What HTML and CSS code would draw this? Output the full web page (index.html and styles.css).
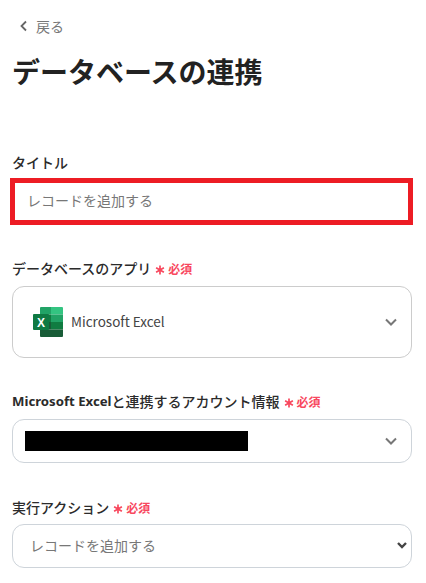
FILE: index.html
```html
<!DOCTYPE html>
<html lang="ja">
<head>
  <meta charset="UTF-8" />
  <meta name="viewport" content="width=device-width, initial-scale=1.0"/>
  <title>データベースの連携</title>
  <link rel="stylesheet" href="styles.css">
</head>
<body>
  <a class="back" href="#">
    <svg class="back-icon" width="10" height="12" viewBox="0 0 10 12"><path d="M7 1.500 2.500 6 7 10.500" fill="none" stroke="#666" stroke-width="1.800"/></svg>
    戻る
  </a>
  <h1>データベースの連携</h1>

  <form class="form">
    <div class="field field-title">
      <label>タイトル</label>
      <input class="title-input" type="text" placeholder="レコードを追加する" />
    </div>

    <div class="field field-app">
      <label>データベースのアプリ<span class="req"><svg class="star" width="10" height="10" viewBox="0 0 10 10"><path d="M5 .5v9M1.100 2.750l7.800 4.500M8.900 2.750l-7.800 4.500" stroke="#f8485e" stroke-width="1.700"/></svg>必須</span></label>
      <div class="picker picker-app">
        <svg class="excel" width="30" height="30" viewBox="0 0 30 30">
          <path d="M18 0H8a1 1 0 0 0-1 1v6.500h11z" fill="#21a366"/>
          <path d="M18 0h11a1 1 0 0 1 1 1v6.500H18z" fill="#33c481"/>
          <rect x="7" y="7.500" width="11" height="7.500" fill="#107c41"/>
          <rect x="18" y="7.500" width="12" height="7.500" fill="#21a366"/>
          <rect x="7" y="15" width="11" height="7.500" fill="#185c37"/>
          <rect x="18" y="15" width="12" height="7.500" fill="#107c41"/>
          <path d="M7 22.500h23V29a1 1 0 0 1-1 1H8a1 1 0 0 1-1-1z" fill="#185c37"/>
          <rect x="0" y="7" width="16" height="16" rx="1" fill="#0f7a43"/>
          <text class="excel-x" x="8" y="19.500" text-anchor="middle">X</text>
        </svg>
        <span class="picker-text">Microsoft Excel</span>
        <svg class="chevron" width="12" height="8" viewBox="0 0 12 8"><path d="M1 1.500 6 6.500 11 1.500" fill="none" stroke="#777" stroke-width="2"/></svg>
      </div>
    </div>

    <div class="field field-account">
      <label><span class="latin">Microsoft Excel</span>と連携するアカウント情報<span class="req"><svg class="star" width="10" height="10" viewBox="0 0 10 10"><path d="M5 .5v9M1.100 2.750l7.800 4.500M8.900 2.750l-7.800 4.500" stroke="#f8485e" stroke-width="1.700"/></svg>必須</span></label>
      <div class="picker picker-account">
        <div class="redacted"></div>
        <svg class="chevron" width="12" height="8" viewBox="0 0 12 8"><path d="M1 1.500 6 6.500 11 1.500" fill="none" stroke="#777" stroke-width="2"/></svg>
      </div>
    </div>

    <div class="field field-action">
      <label>実行アクション<span class="req"><svg class="star" width="10" height="10" viewBox="0 0 10 10"><path d="M5 .5v9M1.100 2.750l7.800 4.500M8.900 2.750l-7.800 4.500" stroke="#f8485e" stroke-width="1.700"/></svg>必須</span></label>
      <div class="select-wrap">
        <select class="action-select">
          <option>レコードを追加する</option>
        </select>
        <svg class="select-arrow" width="10" height="7" viewBox="0 0 10 7"><path d="M1 1 5 5 9 1" fill="none" stroke="#444" stroke-width="2.400"/></svg>
      </div>
    </div>
  </form>
</body>
</html>
```

FILE: styles.css
```css
body {
  margin: 0;
  height: 583px;
  overflow: hidden;
  background-color: #fff;
  color: #2b2b2b;
  font-family: "Noto Sans CJK JP", "Noto Sans", sans-serif;
}

.back {
  display: flex;
  align-items: center;
  gap: 7px;
  height: 20px;
  margin: 16px 0 0 19px;
  color: #777;
  font-size: 14px;
  text-decoration: none;
}

h1 {
  margin: 15px 0 0 12px;
  font-size: 28px;
  line-height: 40px;
  font-weight: 700;
  color: #222;
}

.form {
  margin: 0 14px 0 12px;
}

.field label {
  display: flex;
  align-items: center;
  height: 20px;
  font-size: 14px;
  font-weight: 500;
  font-family: "Noto Sans", "Noto Sans CJK JP", sans-serif;
}

.latin {
  font-size: 13.200px;
  font-weight: 700;
}

.field-title {
  margin-top: 61px;
}

.title-input {
  display: block;
  box-sizing: border-box;
  width: 403px;
  height: 47px;
  margin: 6px 0 0 -2px;
  padding: 0 12px 3px;
  border: 5px solid #ed1c24;
  outline: none;
  font-family: inherit;
  font-size: 14px;
}

.title-input::placeholder {
  color: #777;
  opacity: 1;
}

.field-app {
  margin-top: 33px;
}

.field-account {
  margin-top: 33px;
}

.field-action {
  margin-top: 34px;
}

.req {
  display: flex;
  align-items: center;
  margin-left: 4px;
  color: #f8485e;
  font-size: 12px;
  font-weight: 700;
  font-family: "Noto Sans CJK JP", sans-serif;
}

.star {
  margin: 3px 3px 0 0;
}

.picker {
  display: flex;
  align-items: center;
  box-sizing: border-box;
  width: 400px;
  margin-top: 7px;
  border: 1px solid #ccc;
  border-radius: 12px;
}

.picker-app {
  height: 72px;
  margin-top: 8px;
  padding: 0 14px 0 20px;
}

.excel-x {
  fill: #fff;
  font-family: "Liberation Sans", sans-serif;
  font-size: 12px;
  font-weight: 700;
}

.picker-account {
  height: 44px;
  margin-top: 8px;
  padding: 0 14px 0 12px;
  border-color: #ced4da;
}

.picker-text {
  margin: 0 0 2px 8px;
  font-size: 13.500px;
  color: #444;
}

.chevron {
  margin-left: auto;
}

.redacted {
  width: 223px;
  height: 20px;
  background-color: #000;
}

.select-wrap {
  position: relative;
  width: 400px;
  margin-top: 7px;
}

.action-select {
  display: block;
  box-sizing: border-box;
  width: 100%;
  height: 44px;
  padding: 0 12px 3px 17px;
  border: 1px solid #ced4da;
  border-radius: 12px;
  background-color: #fff;
  color: #777;
  font-family: inherit;
  font-size: 14px;
  appearance: none;
}

.select-arrow {
  position: absolute;
  top: 18px;
  right: 5px;
}
```
